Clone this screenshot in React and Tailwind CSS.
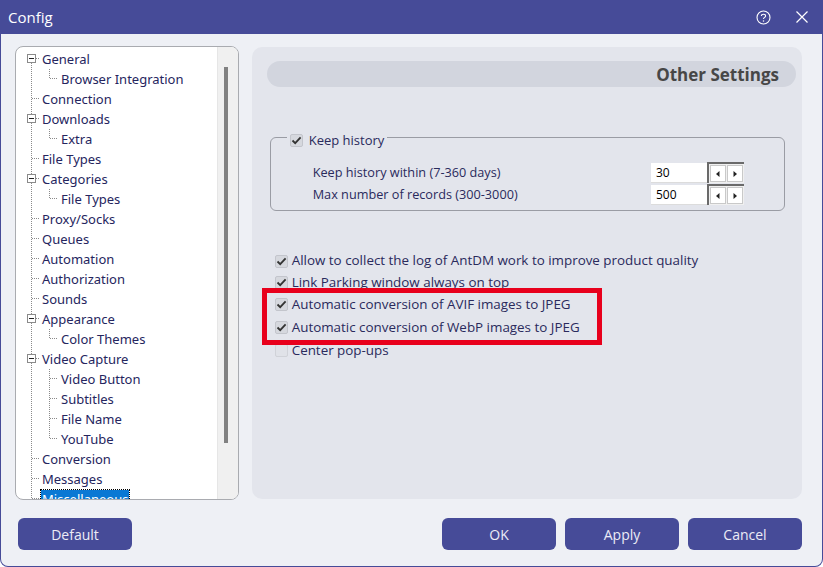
import React from 'react';

const tree = [
  { t: 'General', lvl: 1, box: true, first: true },
  { t: 'Browser Integration', lvl: 2, last: true },
  { t: 'Connection', lvl: 1 },
  { t: 'Downloads', lvl: 1, box: true },
  { t: 'Extra', lvl: 2, last: true },
  { t: 'File Types', lvl: 1 },
  { t: 'Categories', lvl: 1, box: true },
  { t: 'File Types', lvl: 2, last: true },
  { t: 'Proxy/Socks', lvl: 1 },
  { t: 'Queues', lvl: 1 },
  { t: 'Automation', lvl: 1 },
  { t: 'Authorization', lvl: 1 },
  { t: 'Sounds', lvl: 1 },
  { t: 'Appearance', lvl: 1, box: true },
  { t: 'Color Themes', lvl: 2, last: true },
  { t: 'Video Capture', lvl: 1, box: true },
  { t: 'Video Button', lvl: 2 },
  { t: 'Subtitles', lvl: 2 },
  { t: 'File Name', lvl: 2 },
  { t: 'YouTube', lvl: 2, last: true },
  { t: 'Conversion', lvl: 1 },
  { t: 'Messages', lvl: 1 },
  { t: 'Miscellaneous', lvl: 1, selected: true, end: true },
];

function Gutter({ item }) {
  const dot = { stroke: '#8a8a8a', strokeWidth: 1, strokeDasharray: '1 1', shapeRendering: 'crispEdges' };
  const w = item.lvl === 2 ? 44 : 25;
  return (
    <svg width={w} height="20" className="shrink-0">
      {item.first ? (
        <line x1="15.5" y1="14" x2="15.5" y2="20" {...dot} />
      ) : (
        <line x1="15.5" y1="0" x2="15.5" y2={item.end ? 10 : 20} {...dot} />
      )}
      {item.lvl === 1 && !item.box && <line x1="16" y1="9.5" x2="24" y2="9.5" {...dot} />}
      {item.box && (
        <g shapeRendering="crispEdges">
          <rect x="11.5" y="5.5" width="8" height="8" fill="#fff" stroke="#8a8a8a" />
          <line x1="13" y1="9.5" x2="18" y2="9.5" stroke="#222" />
          <line x1="20" y1="9.5" x2="24" y2="9.5" {...dot} />
        </g>
      )}
      {item.lvl === 2 && (
        <>
          <line x1="33.5" y1="0" x2="33.5" y2={item.last ? 10 : 20} {...dot} />
          <line x1="34" y1="9.5" x2="42" y2="9.5" {...dot} />
        </>
      )}
    </svg>
  );
}

function Check({ checked = true }) {
  return (
    <span
      className={`inline-flex w-[13px] h-[13px] shrink-0 items-center justify-center rounded-[2px] border ${
        checked ? 'bg-[#d6d8de] border-[#c3c5cc]' : 'bg-[#e0e2e8] border-[#d0d2d8]'
      }`}
    >
      {checked && (
        <svg width="11" height="11" viewBox="0 0 11 11">
          <path d="M1.5 5.5 L4.2 8.2 L9.6 2.4" fill="none" stroke="#333" strokeWidth="1.8" />
        </svg>
      )}
    </span>
  );
}

function Spinner() {
  const Btn = ({ dir }) => (
    <span className="flex-1 flex items-center justify-center bg-white border border-[#c9c9c9]">
      <svg width="4" height="6" viewBox="0 0 4 6">
        {dir === 'l' ? <path d="M3.5 0 L0 3 L3.5 6Z" fill="#222" /> : <path d="M0.5 0 L4 3 L0.5 6Z" fill="#222" />}
      </svg>
    </span>
  );
  return (
    <span className="flex w-[37px] h-[21px] border-t-2 border-l-2 border-t-[#6a6a6a] border-l-[#6a6a6a] bg-[#f0f0f0] p-[1px] gap-[1px]">
      <Btn dir="l" />
      <Btn dir="r" />
    </span>
  );
}

const checks = [
  { t: 'Allow to collect the log of AntDM work to improve product quality', c: true, h: 22 },
  { t: 'Link Parking window always on top', c: true, h: 21 },
  { t: 'Automatic conversion of AVIF images to JPEG', c: true, h: 23 },
  { t: 'Automatic conversion of WebP images to JPEG', c: true, h: 23 },
  { t: 'Center pop-ups', c: false, h: 23 },
];

export default function App() {
  return (
    <div className="w-[823px] h-[567px] bg-[#464b98] rounded-b-[8px] px-[1px] pb-[1px] flex flex-col" style={{ fontFamily: '"Open Sans", sans-serif' }}>
      {/* title bar */}
      <div className="h-[34px] shrink-0 flex items-center pl-[7px] pr-[14px] text-white">
        <span className="text-[15px] leading-none">Config</span>
        <div className="ml-auto flex items-center gap-[25px]">
          <svg width="15" height="15" viewBox="0 0 15 15">
            <circle cx="7.5" cy="7.5" r="6.5" fill="none" stroke="#fff" strokeWidth="1.1" />
            <path d="M5.4 6 C5.4 3.7 9.6 3.7 9.6 6 C9.6 7.4 7.5 7.4 7.5 9" fill="none" stroke="#fff" strokeWidth="1.1" />
            <circle cx="7.5" cy="11" r="0.75" fill="#fff" />
          </svg>
          <svg width="12" height="12" viewBox="0 0 12 12">
            <path d="M0.5 0.5 L11.5 11.5 M11.5 0.5 L0.5 11.5" stroke="#fff" strokeWidth="1.2" />
          </svg>
        </div>
      </div>

      {/* body */}
      <div className="flex-1 bg-[#eef0f5] rounded-b-[7px] flex flex-col pl-[14px] pr-[20px] pt-[12px]">
        <div className="flex gap-[13px]">
          {/* tree panel */}
          <div className="w-[224px] h-[454px] border border-[#a9abb0] rounded-[8px] flex overflow-hidden bg-white">
            <div className="w-[201px] h-full overflow-hidden pt-[2px] text-[13px] text-[#25255e]" style={{ fontFamily: '"Noto Sans", sans-serif' }}>
              {tree.map((it, i) => (
                <div key={i} className="h-[20px] flex items-center whitespace-nowrap">
                  <Gutter item={it} />
                  <span
                    className={`leading-[18px] px-[1px] ${
                      it.selected ? 'bg-[#0a78d4] text-white outline outline-1 outline-dotted outline-[#000]' : ''
                    }`}
                  >
                    {it.t}
                  </span>
                </div>
              ))}
            </div>
            <div className="flex-1 bg-[#f0f0f0] border-l border-[#e6e6e6] pt-[20px] pl-[6px]">
              <div className="w-[4px] h-[376px] bg-[#818181]" />
            </div>
          </div>

          {/* right panel */}
          <div className="relative mt-[1px] w-[551px] h-[452px] bg-[#e3e5ec] rounded-[10px] pt-[14px] pl-[15px] pr-[6px] text-[13.4px] text-[#2a2a5c]">
            <div className="h-[26px] rounded-full bg-[#d2d5de] flex items-center justify-end pr-[17px]">
              <span className="text-[17px] font-bold text-[#474747] leading-none">Other Settings</span>
            </div>

            <fieldset className="mt-[38px] ml-[3px] mr-[11px] h-[86px] border border-[#9a9ca4] rounded-[6px]">
              <legend className="ml-[16px] px-[3px] pt-[6px] flex items-center gap-[6px] leading-[18px] text-[13px]">
                <Check />
                <span>Keep history</span>
              </legend>
              <div className="mt-[13px] pl-[42px] pr-[40px] flex flex-col gap-[1px] text-[12.7px]">
                {[
                  ['Keep history within (7-360 days)', '30'],
                  ['Max number of records (300-3000)', '500'],
                ].map(([l, v]) => (
                  <div key={l} className="flex items-center h-[21px]">
                    <span>{l}</span>
                    <span className="ml-auto w-[56px] h-[20px] bg-white border-b border-[#dcdcdc] pl-[5px] text-[12px] leading-[20px] text-black">{v}</span>
                    <Spinner />
                  </div>
                ))}
              </div>
            </fieldset>

            <div className="mt-[39px] ml-[8px] flex flex-col">
              {checks.map((c) => (
                <div key={c.t} className="flex items-center gap-[4px]" style={{ height: c.h }}>
                  <Check checked={c.c} />
                  <span className="leading-none">{c.t}</span>
                </div>
              ))}
            </div>

            <div className="absolute left-[10px] top-[241px] w-[340px] h-[57px] border-[5px] border-[#e8001c]" />
          </div>
        </div>

        {/* buttons */}
        <div className="mt-[18px] flex items-center gap-[9px] text-[14px] text-[#ececf6]">
          <button className="ml-[3px] w-[114px] h-[32px] rounded-[6px] bg-[#464b98]">Default</button>
          <div className="ml-auto flex gap-[9px]">
            <button className="w-[114px] h-[32px] rounded-[6px] bg-[#464b98]">OK</button>
            <button className="w-[114px] h-[32px] rounded-[6px] bg-[#464b98]">Apply</button>
            <button className="w-[114px] h-[32px] rounded-[6px] bg-[#464b98]">Cancel</button>
          </div>
        </div>
      </div>
    </div>
  );
}
